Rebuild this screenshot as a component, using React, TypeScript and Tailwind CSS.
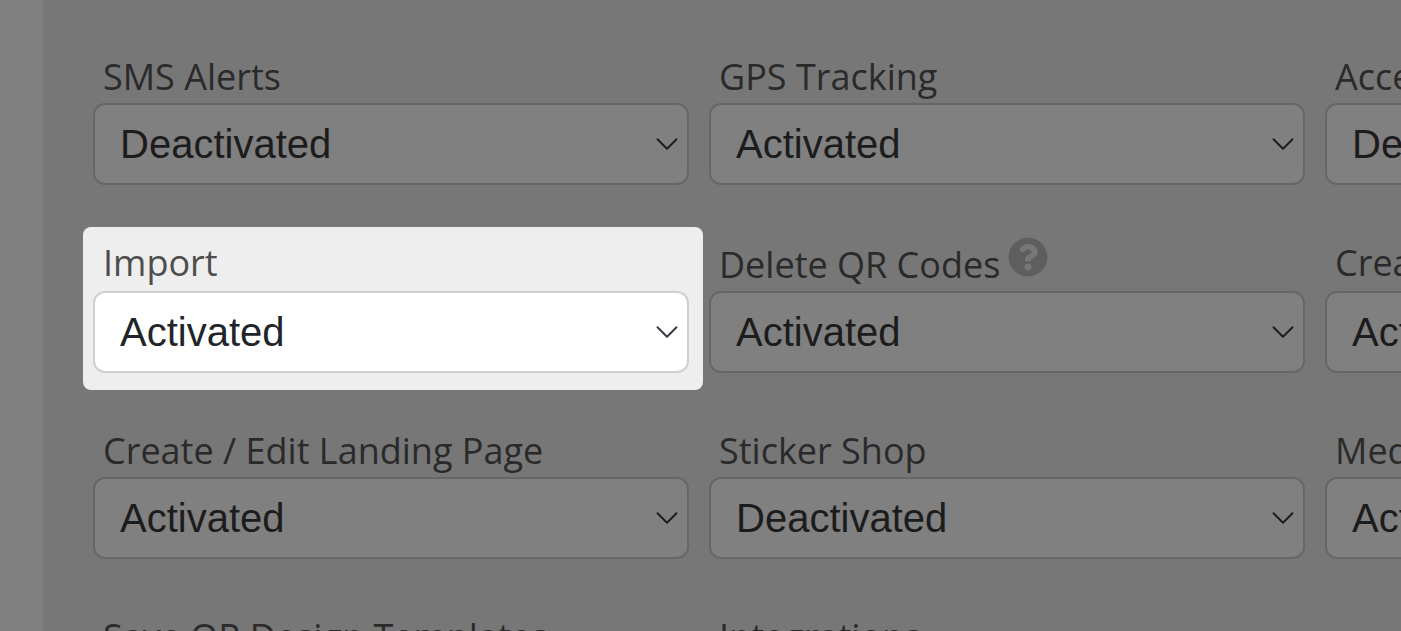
import { ChevronDown } from 'lucide-react';
import { FaQuestionCircle } from 'react-icons/fa';

interface FieldProps {
  label: string;
  value: string;
  spotlight?: boolean;
  hint?: boolean;
}

const fields: FieldProps[] = [
  { label: 'SMS Alerts', value: 'Deactivated' },
  { label: 'GPS Tracking', value: 'Activated' },
  { label: 'Access Restriction', value: 'Deactivated' },
  { label: 'Import', value: 'Activated', spotlight: true },
  { label: 'Delete QR Codes', value: 'Activated', hint: true },
  { label: 'Create Folder', value: 'Activated' },
  { label: 'Create / Edit Landing Page', value: 'Activated' },
  { label: 'Sticker Shop', value: 'Deactivated' },
  { label: 'Media Library', value: 'Activated' },
  { label: 'Save QR Design Templates', value: 'Activated' },
  { label: 'Integrations', value: 'Activated' },
];

function Field({ label, value, spotlight, hint }: FieldProps) {
  return (
    <div className="relative flex flex-col justify-between">
      {spotlight && <div className="absolute -left-[10px] -right-[14px] -top-[14px] -bottom-[17px] rounded-[8px] bg-[#eeeeee]" />}
      <div className={`relative flex items-start pl-[10px] text-[36px] leading-[44px] whitespace-nowrap font-['Open_Sans',sans-serif] ${spotlight ? 'text-[#4d4d4d]' : 'text-[#2a2a2a]'}`}>
        <span className={hint ? 'mt-[2px]' : ''}>{label}</span>
        {hint && <FaQuestionCircle className="ml-2 -mt-[4px] w-[40px] h-[40px] text-[#5e5e5e]" />}
      </div>
      <div className={`relative mt-1 h-[82px] flex items-center pl-[25px] rounded-[12px] border-2 text-[40px] font-['Liberation_Sans',Arial,sans-serif] ${spotlight ? 'bg-white border-[#cfcfcf] text-[#212529]' : 'bg-[#808080] border-[#676767] text-[#1c1c1c]'}`}>
        {value}
        <ChevronDown className={`absolute right-[1px] top-[20px] w-[38px] h-[38px] ${spotlight ? 'text-[#343a40]' : 'text-[#1c1c1c]'}`} strokeWidth={1.2} />
      </div>
    </div>
  );
}

export default function App() {
  return (
    <div className="flex h-screen overflow-hidden bg-[#777777]">
      <aside className="w-[43px] shrink-0 bg-[#808080]" />
      <main className="flex-1 min-w-0 pl-[50px] pt-[55px]">
        <div className="grid grid-cols-[repeat(3,596px)] gap-x-5 gap-y-[56px]">
          {fields.map((f) => (
            <Field key={f.label} {...f} />
          ))}
        </div>
      </main>
    </div>
  );
}
